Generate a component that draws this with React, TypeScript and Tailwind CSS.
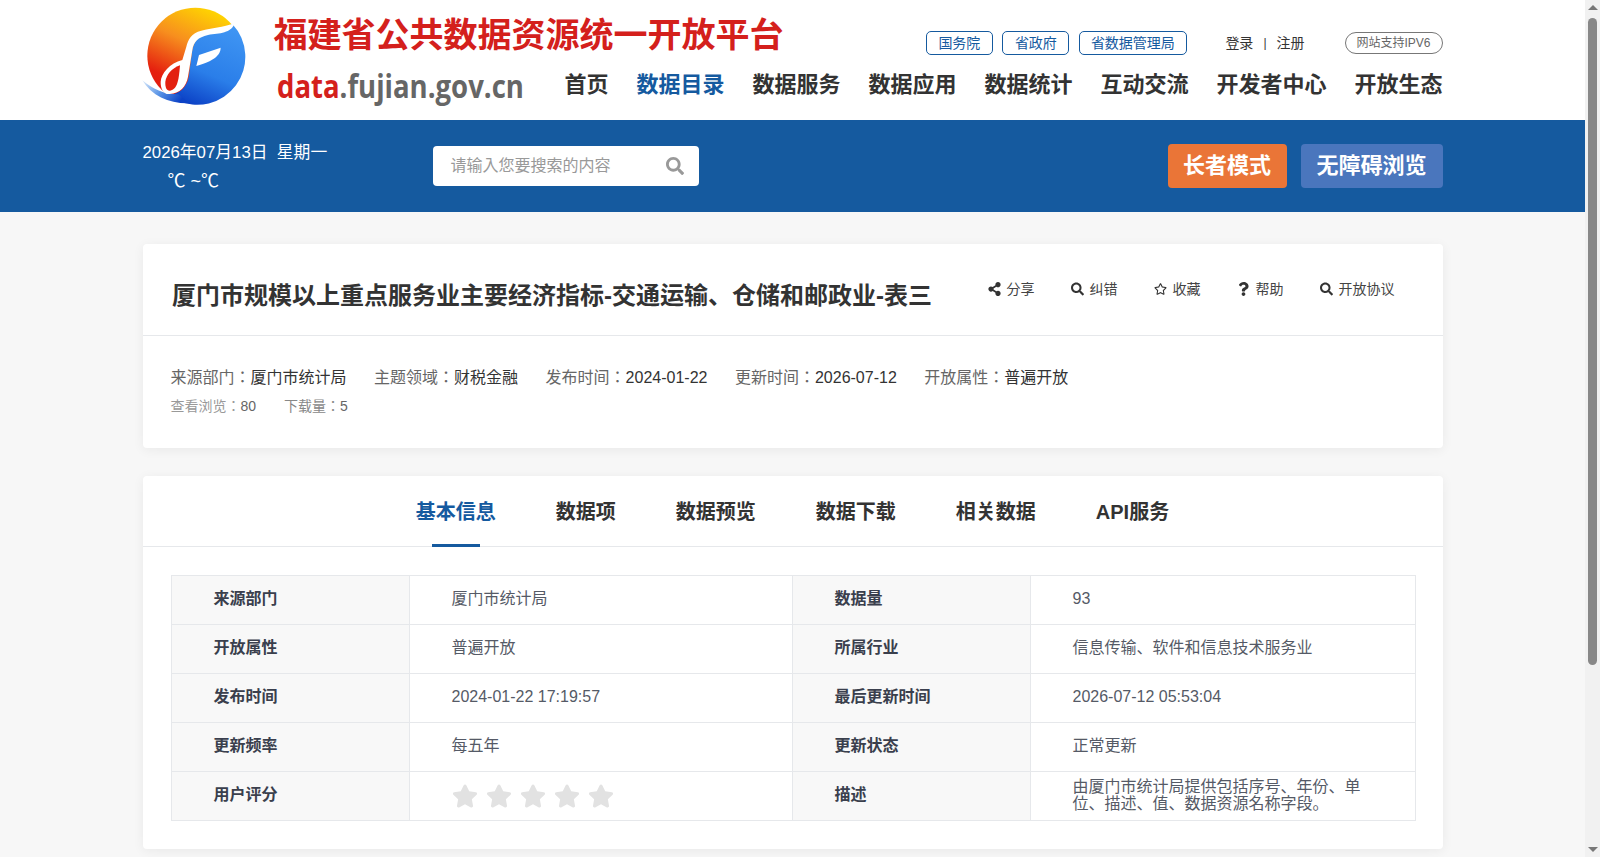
import { FaShareAlt, FaSearch, FaRegStar, FaQuestion, FaStar } from "react-icons/fa";

const FONT = "font-['Liberation_Sans','Noto_Sans_CJK_JP',sans-serif]";

function Logo() {
  return (
    <svg width="125" height="115" viewBox="0 0 375 345" className="ml-[-10px] shrink-0">
      <defs>
        <linearGradient id="warm" x1="0.65" y1="0" x2="0.2" y2="0.95">
          <stop offset="0" stopColor="#ffd600" />
          <stop offset="0.4" stopColor="#f78f1e" />
          <stop offset="0.8" stopColor="#e5200f" />
          <stop offset="1" stopColor="#e01a10" />
        </linearGradient>
        <linearGradient id="cool" x1="0.7" y1="0" x2="0.3" y2="1">
          <stop offset="0" stopColor="#3f95f3" />
          <stop offset="0.6" stopColor="#2a7ee9" />
          <stop offset="1" stopColor="#0c42c6" />
        </linearGradient>
        <linearGradient id="tail" x1="0" y1="0" x2="1" y2="0.4">
          <stop offset="0" stopColor="#dcebfb" />
          <stop offset="0.5" stopColor="#5b95e6" />
          <stop offset="1" stopColor="#0c42c6" />
        </linearGradient>
      </defs>
      <circle cx="187" cy="167" r="144" fill="url(#warm)" />
      <path d="M298 72 A144 144 0 0 1 130 300 L110 285 C150 280 165 250 168 225 L178 150 C185 120 200 105 225 100 Z" fill="url(#cool)" />
      <path d="M28 241 C58 268 98 284 136 283 L170 310 C110 312 56 288 28 241 Z" fill="url(#tail)" />
      <path d="M305 70 C270 82 235 84 205 92 C175 98 165 120 160 140 L148 180 C110 190 85 220 83 245 C82 265 92 285 110 282 C140 280 160 260 165 230 L178 150 C182 125 195 112 225 105 C260 100 295 100 305 70 Z" fill="#ffffff" />
      <path d="M141 196 C115 205 100 225 97 245 C96 260 100 272 110 272 C130 270 137 250 141 196 Z" fill="#e3200f" />
      <path d="M198 165 L263 143 C262 165 245 182 190 198 Z" fill="#ffffff" />
    </svg>
  );
}

function Sub({ children, w }: { children: string; w: string }) {
  return (
    <a className={`flex h-6 items-center justify-center rounded-[5px] border border-[#155a9f] text-sm text-[#155a9f] ${w}`}>
      {children}
    </a>
  );
}

const NAV = ["首页", "数据目录", "数据服务", "数据应用", "数据统计", "互动交流", "开发者中心", "开放生态"];
const TABS = ["基本信息", "数据项", "数据预览", "数据下载", "相关数据", "API服务"];

function Tool({ icon, label }: { icon: React.ReactNode; label: string }) {
  return (
    <span className="flex items-center gap-[6px] text-sm text-[#444]">
      <span className="flex w-[13px] justify-center text-[14px] text-[#333]">{icon}</span>
      {label}
    </span>
  );
}

function Meta({ k, v }: { k: string; v: string }) {
  return (
    <span className="text-[#666]">
      {k}
      <span className="text-[#333]">{v}</span>
    </span>
  );
}

function Row({ a, b, c, d, last }: { a: string; b: React.ReactNode; c: string; d: React.ReactNode; last?: boolean }) {
  const bd = last ? "" : "border-b border-[#e6e8eb]";
  const th = `flex items-center border-r border-[#e6e8eb] bg-[#f8f8f8] pb-[2px] pl-[42px] font-bold text-[#3a3f4d] ${bd}`;
  const td = `flex items-center pb-[2px] pl-[42px] text-[#555a66] ${bd}`;
  return (
    <div className={`grid grid-cols-[238px_383px_238px_1fr] ${last ? "h-[48px]" : "h-[49px]"}`}>
      <div className={th}>{a}</div>
      <div className={`${td} border-r border-[#e6e8eb]`}>{b}</div>
      <div className={th}>{c}</div>
      <div className={td}>{d}</div>
    </div>
  );
}

function Scrollbar() {
  return (
    <aside className="flex h-[857px] w-[15px] shrink-0 flex-col items-center bg-[#f1f1f1]">
      <div className="flex h-[15px] items-center justify-center">
        <span className="size-0 border-x-[5px] border-b-[5px] border-x-transparent border-b-[#777]" />
      </div>
      <div className="mt-[3px] h-[647px] w-[9px] rounded-full bg-[#888]" />
      <div className="mt-auto flex h-[15px] items-center justify-center">
        <span className="size-0 border-x-[5px] border-t-[5px] border-x-transparent border-t-[#777]" />
      </div>
    </aside>
  );
}

export default function App() {
  return (
    <div className={`${FONT} flex h-[857px] overflow-hidden bg-[#f7f7f7] text-base`}>
      <div className="min-w-0 flex-1">
        <header className="h-[120px] bg-white">
          <div className="mx-auto flex h-full w-[1300px]">
            <Logo />
            <div className="ml-[16px] w-[280px] shrink-0 pt-[10px]">
              <div className="whitespace-nowrap text-[34px] font-bold leading-[50px] text-[#d4201c]">福建省公共数据资源统一开放平台</div>
              <div className="ml-[3px] mt-[5px] origin-left scale-x-[0.86] whitespace-nowrap font-['Open_Sans',sans-serif] text-[32px] font-bold leading-[42px] text-[#666]">
                <span className="text-[#d4201c]">data</span>.fujian.gov.cn
              </div>
            </div>
            <div className="flex flex-1 flex-col items-end">
              <div className="mt-[31px] flex items-center">
                <div className="flex gap-[9.5px]">
                  <Sub w="w-[67px]">国务院</Sub>
                  <Sub w="w-[67px]">省政府</Sub>
                  <Sub w="w-[108px]">省数据管理局</Sub>
                </div>
                <div className="ml-[38.5px] flex items-center text-sm text-[#333]">
                  <span>登录</span>
                  <span className="mx-[10px] text-xs">|</span>
                  <span>注册</span>
                </div>
                <div className="ml-[40px] flex h-[22px] w-[98px] items-center justify-center rounded-full border border-[#777] text-xs text-[#666]">
                  网站支持IPV6
                </div>
              </div>
              <nav className="mt-[12px] flex gap-7 whitespace-nowrap text-[22px] font-bold leading-[36px] text-[#333]">
                {NAV.map((n) => (
                  <span key={n} className={n === "数据目录" ? "text-[#155a9f]" : ""}>
                    {n}
                  </span>
                ))}
              </nav>
            </div>
          </div>
        </header>

        <div className="h-[92px] bg-[#155a9f]">
          <div className="mx-auto flex h-full w-[1300px] items-center">
            <div className="w-[290px] text-[16.8px] leading-[29px] text-white">
              <div>2026年07月13日&nbsp;&nbsp;星期一</div>
              <div className="pl-[25px] text-lg">℃ ~℃</div>
            </div>
            <div className="flex h-10 w-[266px] items-center justify-between rounded bg-white pl-[18px] pr-[15px] text-[#999]">
              <span>请输入您要搜索的内容</span>
              <FaSearch className="size-[18px]" />
            </div>
            <div className="ml-auto flex gap-[14px] text-[22px] font-bold text-white">
              <div className="flex h-11 w-[119px] items-center justify-center rounded bg-[#ea7537] pb-px">长者模式</div>
              <div className="flex h-11 w-[142px] items-center justify-center rounded bg-[#4a76bd] pb-px">无障碍浏览</div>
            </div>
          </div>
        </div>

        <main className="mx-auto w-[1300px] pt-8">
          <section className="h-[204px] rounded bg-white shadow-[0_2px_12px_rgba(0,0,0,0.06)]">
            <div className="flex h-[92px] items-center border-b border-[#e6e8eb] pl-[29.5px] pr-[48px] pt-[12px]">
              <h1 className="text-2xl font-bold text-[#333]">厦门市规模以上重点服务业主要经济指标-交通运输、仓储和邮政业-表三</h1>
              <div className="ml-auto flex gap-[36px] pb-[13px]">
                <Tool icon={<FaShareAlt />} label="分享" />
                <Tool icon={<FaSearch />} label="纠错" />
                <Tool icon={<FaRegStar />} label="收藏" />
                <Tool icon={<FaQuestion />} label="帮助" />
                <Tool icon={<FaSearch />} label="开放协议" />
              </div>
            </div>
            <div className="pl-[28px] pt-[28px]">
              <div className="flex gap-[27.5px] leading-[28px]">
                <Meta k="来源部门：" v="厦门市统计局" />
                <Meta k="主题领域：" v="财税金融" />
                <Meta k="发布时间：" v="2024-01-22" />
                <Meta k="更新时间：" v="2026-07-12" />
                <Meta k="开放属性：" v="普遍开放" />
              </div>
              <div className="flex gap-7 text-sm leading-[28px] text-[#999]">
                <span>
                  查看浏览：<span className="text-[#666]">80</span>
                </span>
                <span className="text-[#888]">
                  下载量：<span className="text-[#666]">5</span>
                </span>
              </div>
            </div>
          </section>

          <section className="mt-7 rounded bg-white pb-7 shadow-[0_2px_12px_rgba(0,0,0,0.06)]">
            <div className="flex h-[71px] justify-center gap-[60px] border-b border-[#e6e8eb] text-xl font-bold text-[#333]">
              {TABS.map((t) => (
                <div key={t} className={`relative flex items-center pt-[2px] ${t === "基本信息" ? "text-[#155a9f]" : ""}`}>
                  {t}
                  {t === "基本信息" && <span className="absolute bottom-[-1px] left-4 h-[3px] w-12 bg-[#155a9f]" />}
                </div>
              ))}
            </div>
            <div className="ml-[28px] mr-[27px] mt-7 border border-[#e6e8eb]">
              <Row a="来源部门" b="厦门市统计局" c="数据量" d="93" />
              <Row a="开放属性" b="普遍开放" c="所属行业" d="信息传输、软件和信息技术服务业" />
              <Row a="发布时间" b="2024-01-22 17:19:57" c="最后更新时间" d="2026-07-12 05:53:04" />
              <Row a="更新频率" b="每五年" c="更新状态" d="正常更新" />
              <Row
                last
                a="用户评分"
                b={
                  <span className="flex translate-y-[1px] gap-2 text-[26px] text-[#e2e2e2]">
                    {[0, 1, 2, 3, 4].map((i) => (
                      <FaStar key={i} />
                    ))}
                  </span>
                }
                c="描述"
                d={<span className="w-[300px] leading-[17px]">由厦门市统计局提供包括序号、年份、单位、描述、值、数据资源名称字段。</span>}
              />
            </div>
          </section>
        </main>
      </div>
      <Scrollbar />
    </div>
  );
}
